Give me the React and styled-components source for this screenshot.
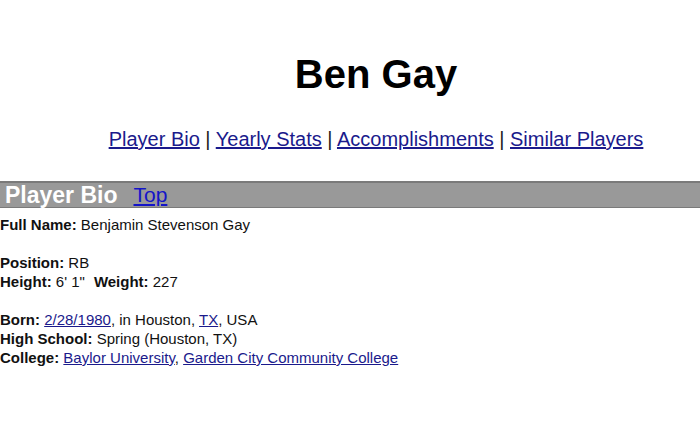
import React from "react";
import styled, { createGlobalStyle } from "styled-components";

const GlobalStyle = createGlobalStyle`
    body {
        margin: 0;
        background: #fff;
        overflow: hidden;
        font-family: "Liberation Sans", Arial, sans-serif;
        color: #111;
    }
`;

const Page = styled.div`
    width: 752px;
`;

const Title = styled.h1`
    margin: 0;
    padding-top: 51px;
    text-align: center;
    font-size: 40px;
    line-height: 46px;
    font-weight: bold;
    color: #000;
`;

const Nav = styled.div`
    margin-top: 30px;
    text-align: center;
    font-size: 20px;
    line-height: 24px;
    color: #222;
`;

const Link = styled.a`
    color: #1a1a8c;
    text-decoration: underline;
`;

const SectionBar = styled.div`
    margin-top: 30px;
    height: 24px;
    display: flex;
    align-items: center;
    gap: 16px;
    padding-left: 5px;
    background: #999;
    border-top: 2px solid #7a7a7a;
    border-bottom: 1px solid #7a7a7a;
`;

const BarTitle = styled.span`
    font-size: 23px;
    font-weight: bold;
    color: #fff;
`;

const BarLink = styled.a`
    font-size: 21px;
    color: #1414c8;
    text-decoration: underline;
`;

const Bio = styled.div`
    padding-top: 7px;
    font-size: 15px;
    line-height: 19px;
`;

const Line = styled.div`
    min-height: 19px;
`;

const Label = styled.b`
    margin-left: ${(p) => (p.$gap ? "9px" : "0")};
`;

export default function App() {
    return (
        <Page>
            <GlobalStyle />
            <Title>Ben Gay</Title>
            <Nav>
                <Link href="#bio">Player Bio</Link> | <Link href="#stats">Yearly Stats</Link> |{" "}
                <Link href="#acc">Accomplishments</Link> | <Link href="#sim">Similar Players</Link>
            </Nav>
            <SectionBar>
                <BarTitle>Player Bio</BarTitle>
                <BarLink href="#top">Top</BarLink>
            </SectionBar>
            <Bio>
                <Line>
                    <Label>Full Name:</Label> Benjamin Stevenson Gay
                </Line>
                <Line />
                <Line>
                    <Label>Position:</Label> RB
                </Line>
                <Line>
                    <Label>Height:</Label> 6' 1"
                    <Label $gap>Weight:</Label> 227
                </Line>
                <Line />
                <Line>
                    <Label>Born:</Label> <Link href="#d">2/28/1980</Link>, in Houston, <Link href="#tx">TX</Link>, USA
                </Line>
                <Line>
                    <Label>High School:</Label> Spring (Houston, TX)
                </Line>
                <Line>
                    <Label>College:</Label> <Link href="#b">Baylor University</Link>,{" "}
                    <Link href="#g">Garden City Community College</Link>
                </Line>
            </Bio>
        </Page>
    );
}
